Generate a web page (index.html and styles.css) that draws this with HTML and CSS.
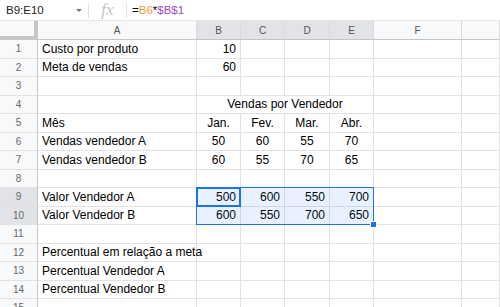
FILE: index.html
```html
<!DOCTYPE html>
<html lang="pt-BR">
<head>
  <meta charset="UTF-8">
  <title>Vendas por Vendedor</title>
  <link rel="stylesheet" href="styles.css">
</head>
<body>
  <div class="formula-bar">
    <div class="name-box">B9:E10</div>
    <div class="name-arrow"></div>
    <div class="sep"></div>
    <div class="fx">fx</div>
    <div class="sep"></div>
    <div class="formula">=<span class="ref-a">B6</span>*<span class="ref-b">$B$1</span></div>
  </div>

  <div id="sheet" class="sheet">
    <!-- cells are added by the script -->
  </div>

  <script>
    const columns = ['A', 'B', 'C', 'D', 'E', 'F', ''];
    const selectedCols = ['B', 'C', 'D', 'E'];
    const selectedRows = [9, 10];

    const rows = {
      1: { a: 'Custo por produto', vals: ['10'], align: 'right' },
      2: { a: 'Meta de vendas', vals: ['60'], align: 'right' },
      5: { a: 'Mês', vals: ['Jan.', 'Fev.', 'Mar.', 'Abr.'], align: 'center' },
      6: { a: 'Vendas vendedor A', vals: ['50', '60', '55', '70'], align: 'center' },
      7: { a: 'Vendas vendedor B', vals: ['60', '55', '70', '65'], align: 'center' },
      9: { a: 'Valor Vendedor A', vals: ['500', '600', '550', '700'], align: 'right' },
      10: { a: 'Valor Vendedor B', vals: ['600', '550', '700', '650'], align: 'right' },
      12: { a: 'Percentual em relação a meta', vals: [] },
      13: { a: 'Percentual Vendedor A', vals: [] },
      14: { a: 'Percentual Vendedor B', vals: [] }
    };

    function cell(cls, text) {
      const el = document.createElement('div');
      el.className = cls;
      if (text) el.textContent = text;
      return el;
    }

    function buildSheet() {
      const sheet = document.getElementById('sheet');

      sheet.appendChild(cell('corner'));
      columns.forEach(col => {
        const sel = selectedCols.includes(col) ? ' selected' : '';
        sheet.appendChild(cell('col-head' + sel, col));
      });

      for (let r = 1; r <= 15; r++) {
        const sel = selectedRows.includes(r) ? ' selected' : '';
        sheet.appendChild(cell('row-head' + sel, String(r)));

        if (r === 4) {
          sheet.appendChild(cell('cell'));
          sheet.appendChild(cell('cell merged', 'Vendas por Vendedor'));
          sheet.appendChild(cell('cell'));
          sheet.appendChild(cell('cell'));
          continue;
        }

        const data = rows[r] || { a: '', vals: [] };
        sheet.appendChild(cell('cell', data.a));
        for (let c = 0; c < 4; c++) {
          const el = cell('cell ' + (data.align || ''), data.vals[c] || '');
          if (r === 9 && c === 0) {
            // selection B9:E10 drawn over the cells
            const range = cell('range');
            range.appendChild(cell('fill-handle'));
            el.appendChild(range);
            el.appendChild(cell('active-cell'));
          }
          sheet.appendChild(el);
        }
        sheet.appendChild(cell('cell'));
        sheet.appendChild(cell('cell'));
      }
    }

    buildSheet();
  </script>
</body>
</html>
```

FILE: styles.css
```css
*, *::before, *::after {
  box-sizing: border-box;
}

body {
  margin: 0;
  font-family: 'Liberation Sans', Arial, sans-serif;
  background: #fff;
  color: #000;
  overflow: hidden;
}

.formula-bar {
  height: 21px;
  display: flex;
  align-items: center;
  border-bottom: 1px solid #e6e6e6;
  font-size: 11px;
}

.name-box {
  width: 72px;
  padding-left: 6px;
  color: #222;
  font-size: 11.5px;
}

.name-arrow {
  width: 0;
  height: 0;
  border-left: 3px solid transparent;
  border-right: 3px solid transparent;
  border-top: 3px solid #777;
  margin-left: 4px;
  margin-right: 6px;
}

.sep {
  width: 1px;
  height: 15px;
  background: #e3e3e3;
}

.fx {
  width: 37px;
  text-align: center;
  font-family: 'Liberation Serif', serif;
  font-style: italic;
  font-size: 17px;
  color: #c4c4c4;
  line-height: 1;
  padding-bottom: 2px;
}

.formula {
  padding-left: 5px;
  font-size: 11.5px;
}

.ref-a {
  color: #f29a3b;
}

.ref-b {
  color: #9a4cc0;
}

.sheet {
  display: grid;
  grid-template-columns: 38px 159px 44px 44px 45px 44px 88px 38px;
  grid-template-rows: 19px repeat(15, 18.5px);
  font-size: 12px;
}

.corner {
  background: #f8f9fa;
  border-right: 4px solid #c4c7c5;
  border-bottom: 4px solid #c4c7c5;
}

.col-head {
  background: #f8f9fa;
  border-right: 1px solid #d9d9d9;
  border-bottom: 1px solid #c4c4c4;
  color: #555;
  font-size: 10px;
  display: flex;
  align-items: center;
  justify-content: center;
}

.row-head {
  background: #f8f9fa;
  border-right: 1px solid #c4c4c4;
  border-bottom: 1px solid #e2e2e2;
  color: #666;
  font-size: 10px;
  display: flex;
  align-items: center;
  justify-content: center;
}

.col-head.selected,
.row-head.selected {
  background: #e1e3e6;
}

.cell {
  border-right: 1px solid #e2e2e2;
  border-bottom: 1px solid #e2e2e2;
  padding: 0 4px;
  display: flex;
  align-items: center;
  white-space: nowrap;
  position: relative;
}

.cell.right {
  justify-content: flex-end;
}

.cell.center {
  justify-content: center;
}

.cell.merged {
  grid-column: span 4;
  justify-content: center;
}

.range {
  position: absolute;
  left: -1px;
  top: -1px;
  width: 178px;
  height: 38px;
  border: 1px solid #1a73e8;
  background: rgba(26, 115, 232, 0.1);
  pointer-events: none;
  z-index: 2;
}

.fill-handle {
  position: absolute;
  right: -4px;
  bottom: -4px;
  width: 7px;
  height: 7px;
  background: #1a73e8;
  border: 1px solid #fff;
}

.active-cell {
  position: absolute;
  left: -1px;
  top: -1px;
  width: 45px;
  height: 20px;
  border: 2px solid #1a73e8;
  pointer-events: none;
  z-index: 3;
}
```
